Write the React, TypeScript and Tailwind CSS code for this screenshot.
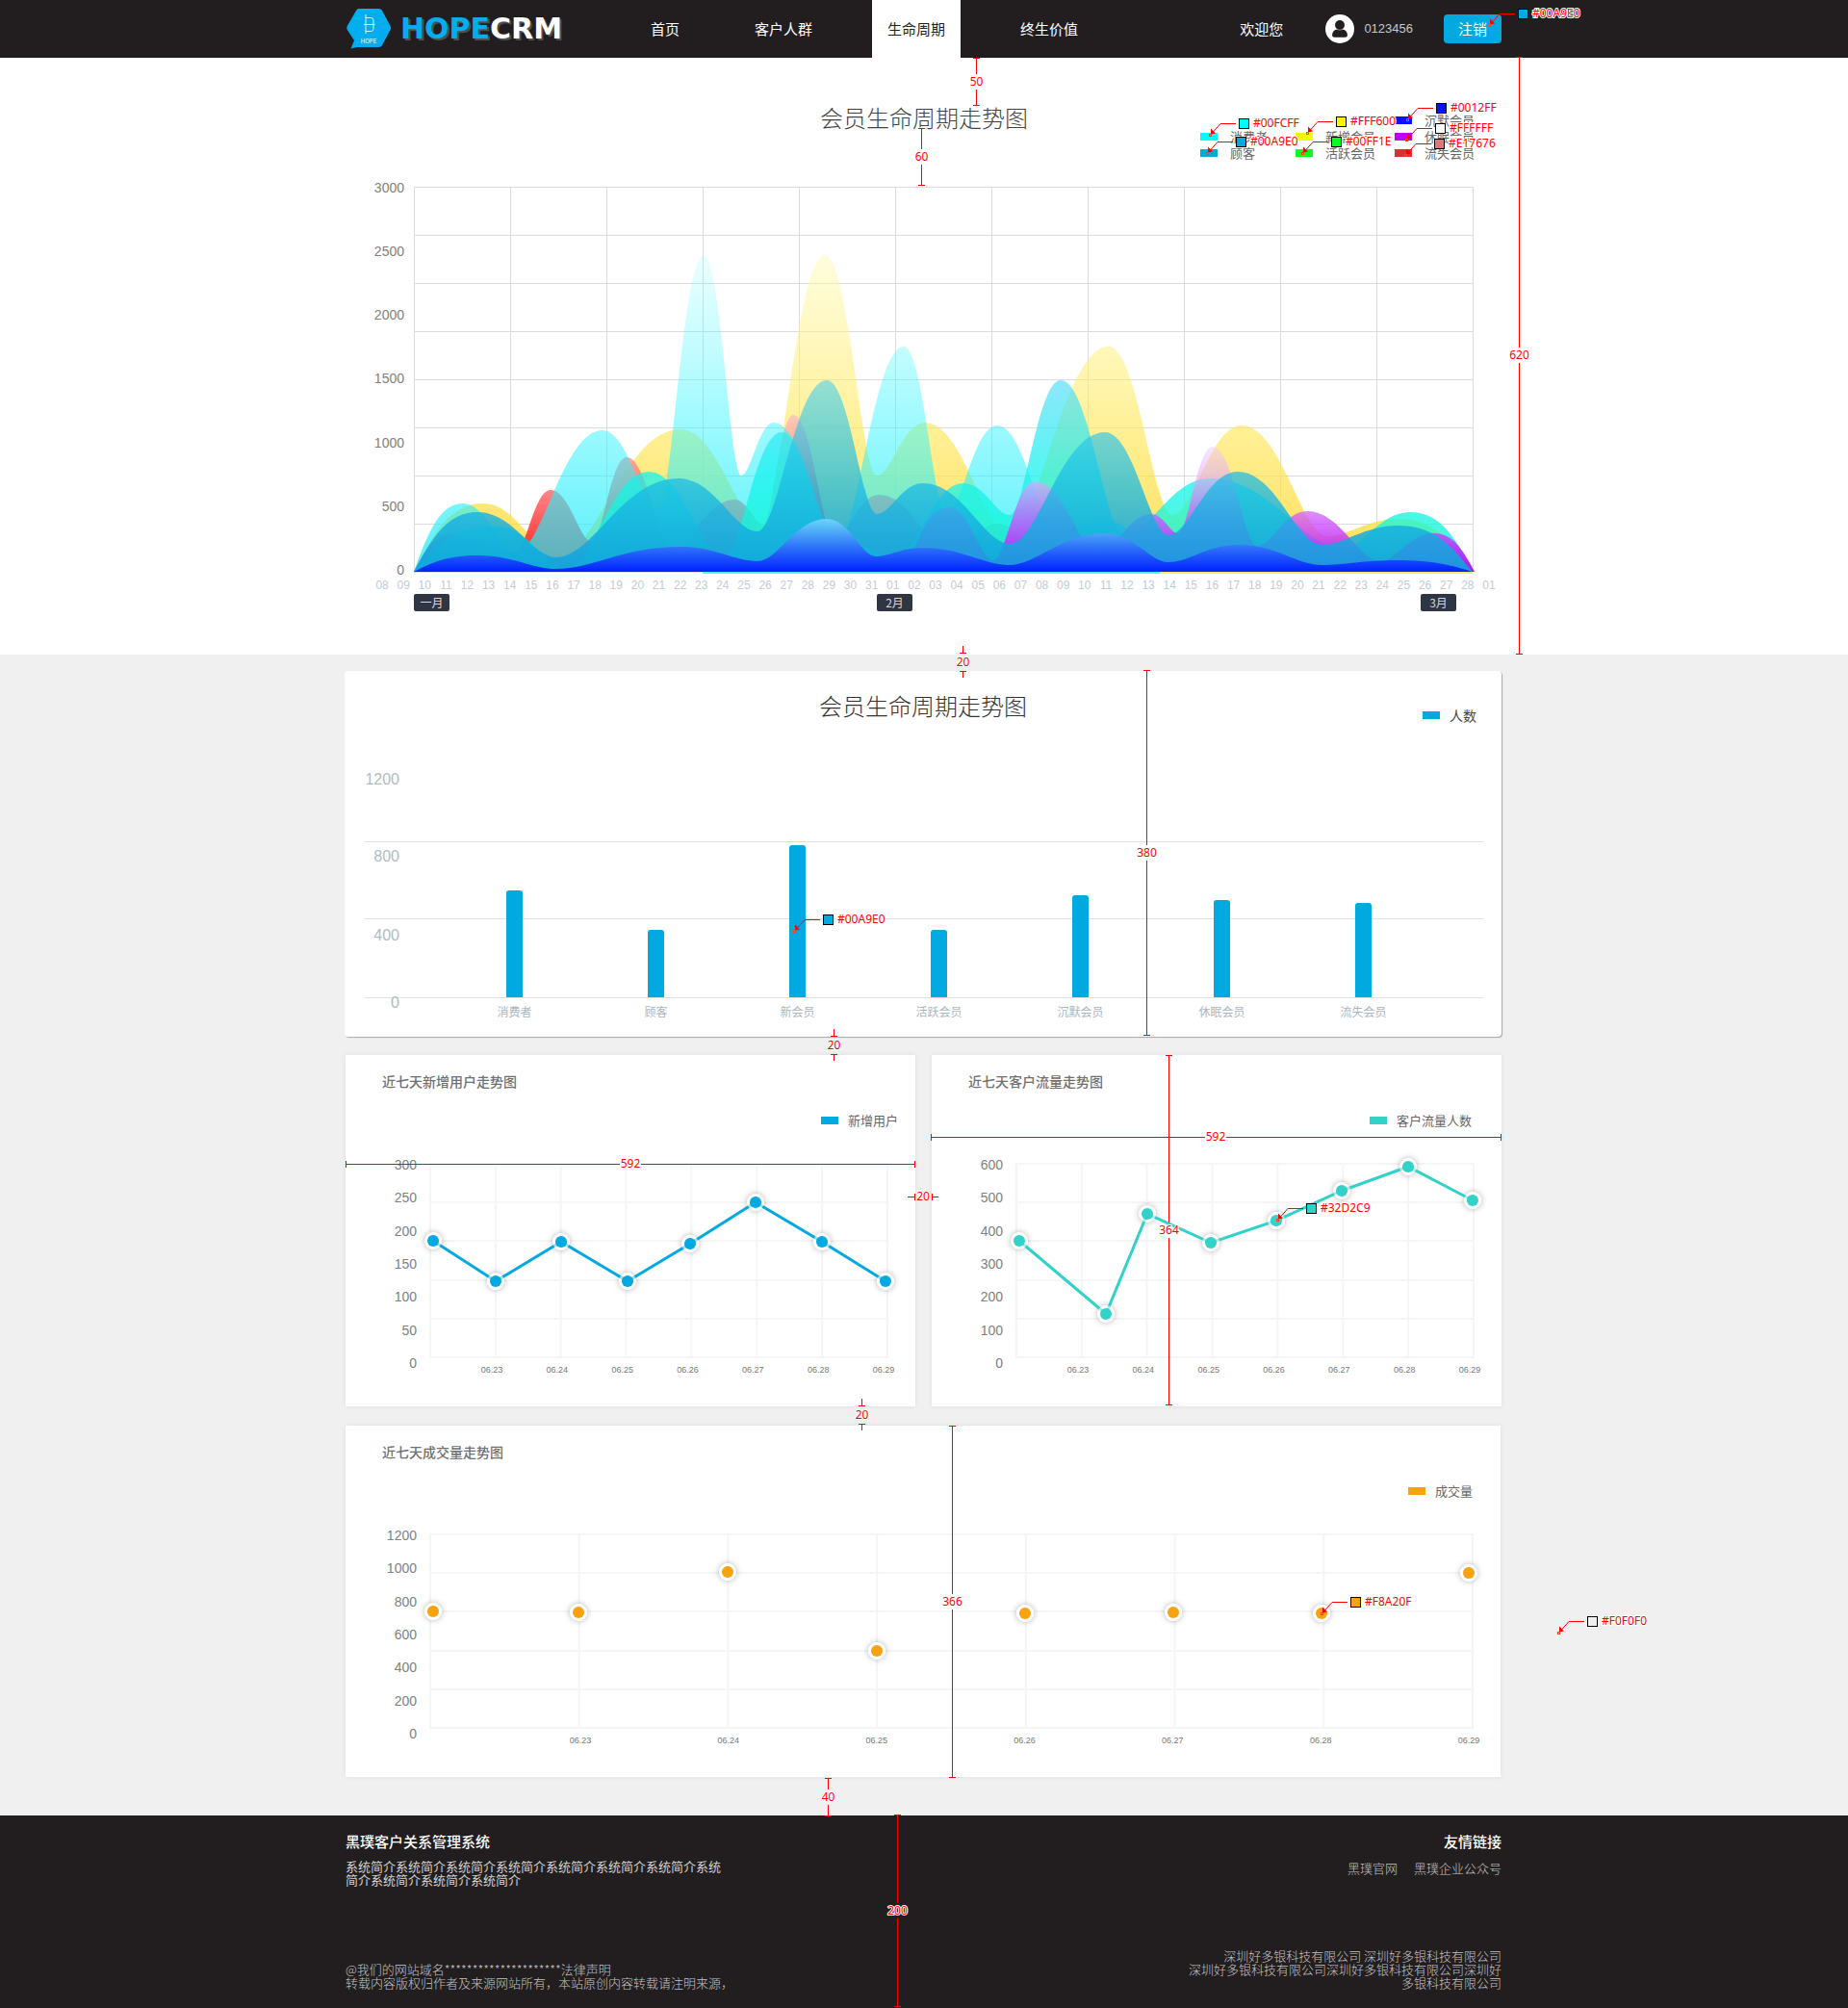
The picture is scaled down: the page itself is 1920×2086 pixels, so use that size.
import React from "react";

type Point = [number, number];

const MENU = ["首页", "客户人群", "生命周期", "终生价值"];

/* ---------- shared pieces ---------- */

function Swatch({ className }: { className: string }) {
  return <span className={`h-2 w-[18px] shrink-0 ${className}`} />;
}

/* ---------- header ---------- */

function LogoMark() {
  return (
    <svg width="47" height="42" viewBox="0 0 47 42" aria-hidden="true">
      <path
        d="M12.5 0H33.5Q36 0 37 2L45.5 18Q46.5 20 45.5 22L37 38Q36 40 33.5 40H10.5L4.500 41.500L8 33L.8 22Q-.2 20 .8 18L10 2Q11 0 12.500 0Z"
        fill="#00aeef"
      />
      <path
        d="M20 6V26M20 9.500H25.500Q28 9.500 28 12V21Q28 23.500 25.500 23.500H20M18 16.500H29.500"
        fill="none"
        stroke="#fff"
        strokeWidth="0.9"
      />
      <text x="23" y="35.500" textAnchor="middle" fontSize="6" fontFamily="Inter, sans-serif" fill="#fff">
        HOPE
      </text>
    </svg>
  );
}

function Avatar() {
  return (
    <svg className="ml-[44px]" width="30" height="30" viewBox="0 0 30 30" aria-hidden="true">
      <circle cx="15" cy="15" r="15" fill="#fff" />
      <circle cx="15" cy="11" r="5" fill="#221e1f" />
      <path d="M7 21.500Q7.500 16 12.500 15.500Q15 17.200 17.500 15.500Q22.500 16 23 21.500Q23 23.800 20.500 23.800H9.500Q7 23.800 7 21.500Z" fill="#221e1f" />
    </svg>
  );
}

function Header() {
  return (
    <header className="bg-[#221e1f] text-white">
      <div className="mx-auto flex h-[60px] max-w-[1200px] items-center">
        <a href="#" className="flex w-[300px] shrink-0 items-center gap-[9px]">
          <LogoMark />
          <span className="font-['DejaVu_Sans',sans-serif] text-[30px] leading-8 font-bold [text-shadow:2px_2px_0_#4d4f52]">
            <span className="text-[#00aeef]">HOPE</span>CRM
          </span>
        </a>
        <nav className="flex gap-[46px]">
          {MENU.map((item) => (
            <a
              key={item}
              href="#"
              className={
                item === "生命周期"
                  ? "bg-white px-4 text-[15px] leading-[60px] text-[#222]"
                  : "px-4 text-[15px] leading-[60px]"
              }
            >
              {item}
            </a>
          ))}
        </nav>
        <div className="ml-auto flex items-center">
          <span className="text-[15px]">欢迎您</span>
          <Avatar />
          <span className="ml-[10px] font-['Liberation_Sans',sans-serif] text-[13px] text-[#c9c9c9]">0123456</span>
          <button type="button" className="ml-[32px] h-[30px] w-[60px] rounded bg-[#00a9e0] text-[15px]">
            注销
          </button>
        </div>
      </div>
    </header>
  );
}

/* ---------- life-cycle trend ---------- */

/* Smooth closed area whose listed points are its peaks and troughs. Peaks are broad, troughs narrow. */
function areaPath(points: Point[]) {
  let d = `M${points[0][0]} 400`;
  for (let i = 1; i < points.length; i++) {
    const [x0, y0] = points[i - 1];
    const [x1, y1] = points[i];
    const dx = x1 - x0;
    const first = i === 1;
    const last = i === points.length - 1;
    const c0x = x0 + dx * (y0 < y1 ? 0.46 : 0.3);
    const c1x = x1 - dx * (y1 < y0 ? 0.46 : 0.3);
    const c0y = first ? y0 + (y1 - y0) * 0.6 : y0;
    const c1y = last ? y1 + (y0 - y1) * 0.6 : y1;
    d += `C${c0x} ${c0y} ${c1x} ${c1y} ${x1} ${y1}`;
  }
  return d + "V400Z";
}

const SERIES: { id: string; top: number; stops: [number, string, number][]; points: Point[] }[] = [
  {
    id: "fresh",
    top: 70,
    stops: [[0, "#fff9a8", 0.4], [0.5, "#ffe95c", 0.6], [1, "#ffd834", 0.85]],
    points: [[0, 400], [72, 329], [150, 385], [277, 252], [361, 350], [427, 71], [481, 300], [531, 245], [618, 360], [722, 166], [788, 341], [860, 248], [949, 363], [1024, 345], [1100, 400]],
  },
  {
    id: "lost",
    top: 230,
    stops: [[0, "#ffc4c8", 0.75], [0.5, "#ff7070", 0.85], [1, "#ff1010", 1]],
    points: [[0, 400], [40, 361], [105, 381], [142, 315], [185, 369], [221, 281], [268, 376], [333, 325], [363, 351], [394, 237], [437, 366], [483, 320], [560, 385], [606, 350], [646, 400]],
  },
  {
    id: "consumer",
    top: 70,
    stops: [[0, "#5cf8ff", 0.12], [0.5, "#30f5ff", 0.45], [1, "#20e8f8", 0.75]],
    points: [[0, 400], [51, 329], [106, 380], [196, 253], [254, 335], [301, 71], [340, 300], [374, 245], [441, 365], [509, 166], [553, 339], [606, 248], [670, 363], [714, 346], [775, 400]],
  },
  {
    id: "active",
    top: 200,
    stops: [[0, "#50dcfa", 0.65], [0.5, "#18f2ee", 0.75], [1, "#10fac8", 0.8]],
    points: [[0, 400], [83, 352], [160, 396], [244, 296], [322, 385], [382, 255], [438, 366], [500, 385], [571, 308], [619, 341], [672, 201], [738, 362], [827, 303], [965, 376], [1035, 338], [1101, 400]],
  },
  {
    id: "dormant",
    top: 265,
    stops: [[0, "#f3c8ff", 0.4], [0.3, "#dca8ff", 0.65], [0.6, "#cc50ff", 0.75], [1, "#b800ff", 0.95]],
    points: [[512, 400], [556, 333], [602, 388], [645, 306], [712, 382], [766, 340], [794, 360], [830, 270], [876, 373], [928, 337], [1004, 389], [1060, 360], [1102, 400]],
  },
  {
    id: "customer",
    top: 200,
    stops: [[0, "#40d0f0", 0.55], [0.5, "#1cbce4", 0.72], [1, "#10a0dc", 0.92]],
    points: [[0, 400], [66, 338], [148, 385], [275, 303], [357, 358], [429, 201], [481, 340], [529, 308], [619, 371], [718, 255], [784, 362], [856, 296], [943, 372], [1023, 352], [1100, 400]],
  },
  {
    id: "silent",
    top: 344,
    stops: [[0, "#72dcfc", 0.9], [0.5, "#3478fa", 0.95], [1, "#0020ff", 1]],
    points: [[0, 400], [66, 383], [147, 397], [277, 374], [357, 389], [429, 345], [480, 384], [529, 375], [618, 393], [718, 360], [784, 390], [857, 372], [943, 393], [1022, 388], [1100, 400]],
  },
];

function range(n: number) {
  return Array.from({ length: n }, (_, i) => i);
}

const DAYS = [...range(24).map((i) => i + 8), ...range(28).map((i) => i + 1), 1].map((n) => String(n).padStart(2, "0"));

const TREND_LEGEND = [
  { label: "消费者", swatch: "bg-[#00fcff]", cell: "col-start-1 row-start-2" },
  { label: "顾客", swatch: "bg-[#00a9e0]", cell: "col-start-1 row-start-3" },
  { label: "新增会员", swatch: "bg-[#fff600]", cell: "col-start-2 row-start-2" },
  { label: "活跃会员", swatch: "bg-[#00ff1e]", cell: "col-start-2 row-start-3" },
  { label: "沉默会员", swatch: "bg-[#0012ff]", cell: "col-start-3 row-start-1" },
  { label: "休眠会员", swatch: "bg-[#c000ff]", cell: "col-start-3 row-start-2" },
  { label: "流失会员", swatch: "bg-[#d83232]", cell: "col-start-3 row-start-3" },
];

function TrendPlot() {
  return (
    <svg className="block h-auto w-full overflow-visible" viewBox="0 0 1100 401" role="img" aria-label="会员生命周期走势图">
      <defs>
        {SERIES.map((s) => (
          <linearGradient key={s.id} id={s.id} gradientUnits="userSpaceOnUse" x1="0" y1={s.top} x2="0" y2="400">
            {s.stops.map(([offset, color, opacity]) => (
              <stop key={offset} offset={offset} stopColor={color} stopOpacity={opacity} />
            ))}
          </linearGradient>
        ))}
      </defs>
      <g stroke="#dcdcdc">
        {range(9).map((i) => (
          <line key={i} x1="0" x2="1100" y1={i * 50 + 0.5} y2={i * 50 + 0.5} />
        ))}
        {range(12).map((i) => (
          <line key={i} x1={i * 100 + 0.5} x2={i * 100 + 0.5} y1="0" y2="400" />
        ))}
      </g>
      <rect x="300" y="400" width="475" height="2" fill="#50eef8" />
      <rect x="775" y="400" width="325" height="2" fill="#ffe66a" />
      {SERIES.map((s) => (
        <path key={s.id} d={areaPath(s.points)} fill={`url(#${s.id})`} />
      ))}
    </svg>
  );
}

function TrendSection() {
  const month = "w-[37px] rounded-xs bg-[#2f3543] text-center text-[12px] leading-[18px] text-[#d5d7dc]";
  return (
    <section className="bg-white pt-[46px] pb-[45px]">
      <div className="mx-auto max-w-[1200px]">
        <div className="grid grid-cols-[1fr_auto_1fr] items-start">
          <h1 className="col-start-2 text-2xl leading-8 font-light text-[#444]">会员生命周期走势图</h1>
          <ul className="mt-[10px] mr-[28px] grid grid-cols-[99px_103px_auto] justify-end text-[13px] leading-[17px] text-[#666]">
            {TREND_LEGEND.map((l) => (
              <li key={l.label} className={`flex items-center gap-[13px] ${l.cell}`}>
                <Swatch className={l.swatch} />
                {l.label}
              </li>
            ))}
          </ul>
        </div>
        <div className="mt-5 flex">
          <div className="flex w-[60px] flex-col justify-between text-right font-['Liberation_Sans',sans-serif] text-[14px] leading-4 text-[#808080]">
            {[3000, 2500, 2000, 1500, 1000, 500, 0].map((v) => (
              <span key={v}>{v}</span>
            ))}
          </div>
          <div className="mt-[7px] mr-[30px] mb-[5px] ml-[10px] flex-1">
            <TrendPlot />
          </div>
        </div>
        <div className="mr-[2px] ml-[26px] grid grid-cols-[repeat(53,minmax(0,1fr))] text-center font-['Liberation_Sans',sans-serif] text-[12px] leading-4 text-[#c6cad4]">
          {DAYS.map((d, i) => (
            <span key={i}>{d}</span>
          ))}
        </div>
        <div className="mt-px mr-[47px] ml-[70px] flex">
          <span className={month}>一月</span>
          <span className="grow-[444]" />
          <span className={month}>2月</span>
          <span className="grow-[528]" />
          <span className={month}>3月</span>
        </div>
      </div>
    </section>
  );
}

/* ---------- member counts ---------- */

const BARS = [
  { label: "消费者", height: 111 },
  { label: "顾客", height: 70 },
  { label: "新会员", height: 158 },
  { label: "活跃会员", height: 70 },
  { label: "沉默会员", height: 106 },
  { label: "休眠会员", height: 101 },
  { label: "流失会员", height: 98 },
];

function MembersCard() {
  return (
    <section className="-ml-[2px] rounded bg-white pt-5 pb-[18px] shadow-[1px_1px_1px_#a8a8a8]">
      <div className="grid grid-cols-[1fr_auto_1fr] items-start">
        <h2 className="col-start-2 text-2xl leading-8 font-light text-[#333]">会员生命周期走势图</h2>
        <div className="mt-[18px] mr-[26px] flex items-center gap-[10px] justify-self-end text-[14px] leading-4 text-[#444]">
          <Swatch className="bg-[#00a9e0]" />
          人数
        </div>
      </div>
      <div className="mt-[49px] grid">
        <div className="col-start-1 row-start-1 mr-[19px] ml-[21px] pt-[74px]">
          <div className="h-[80px] border-t border-[#e0e0e0]" />
          <div className="h-[82px] border-t border-[#e0e0e0]" />
          <div className="border-t border-[#e0e0e0]" />
        </div>
        <div className="col-start-1 row-start-1 flex w-[57px] flex-col text-right font-['Liberation_Sans',sans-serif] text-[16px] leading-5 text-[#b0bcc4]">
          <span>1200</span>
          <span className="mt-[60px]">800</span>
          <span className="mt-[62px]">400</span>
          <span className="mt-[50px]">0</span>
        </div>
        <div className="col-start-1 row-start-1 mr-[70px] ml-[103px] grid grid-cols-7">
          {BARS.map((b) => (
            <div key={b.label} className="flex flex-col items-center">
              <div className="flex h-[236px] items-end">
                <div className="w-[17px] rounded-t-[3px] bg-[#00a9e0]" style={{ height: b.height }} />
              </div>
              <span className="mt-[7px] text-[12px] leading-4 text-[#aab6bd]">{b.label}</span>
            </div>
          ))}
        </div>
      </div>
    </section>
  );
}

/* ---------- seven-day charts ---------- */

interface WeekProps {
  title: string;
  legend: string;
  swatch: string;
  color: string;
  legendInset: string;
  labelInset: string;
  ticks: number[];
  width: number;
  points: Point[];
  joined: boolean;
}

const DATES = ["06.23", "06.24", "06.25", "06.26", "06.27", "06.28", "06.29"];

function WeekCard(p: WeekProps) {
  const rows = [1, 41, 81, 122, 162, 202];
  return (
    <section className="bg-white pt-[17px] pb-[32px] shadow-[0_0_4px_#dcdcdc]">
      <h2 className="pl-[38px] text-[14px] leading-5 font-medium text-[#707070]">{p.title}</h2>
      <div className={`mt-[23px] flex items-center justify-end gap-[10px] text-[13px] leading-4 text-[#666] ${p.legendInset}`}>
        <Swatch className={p.swatch} />
        {p.legend}
      </div>
      <div className="mt-[30px] flex">
        <div className="flex h-[222px] w-[74px] flex-col justify-between text-right font-['Liberation_Sans',sans-serif] text-[14px] leading-4 text-[#808080]">
          {p.ticks.map((t) => (
            <span key={t}>{t}</span>
          ))}
        </div>
        <div className="mt-[6px] mr-[29px] ml-[14px] flex-1">
          <svg className="block h-auto w-full overflow-visible" viewBox={`0 0 ${p.width} 203`} role="img" aria-label={p.title}>
            <g stroke="#f5f5f5" strokeWidth="2">
              {rows.map((y) => (
                <line key={y} x1="0" x2={p.width} y1={y} y2={y} />
              ))}
              {range(8).map((i) => (
                <line key={i} x1={(i * p.width) / 7} x2={(i * p.width) / 7} y1="0" y2="203" />
              ))}
            </g>
            {p.points.map(([x, y]) => (
              <circle key={x} cx={x} cy={y} r="9" fill="#fff" className="drop-shadow-[0_0_3px_rgba(0,0,0,0.3)]" />
            ))}
            {p.joined && (
              <polyline points={p.points.map((pt) => pt.join(",")).join(" ")} fill="none" stroke={p.color} strokeWidth="3" />
            )}
            {p.points.map(([x, y]) => (
              <g key={x}>
                <circle cx={x} cy={y} r="7.500" fill="none" stroke="#fff" strokeWidth="3" opacity={p.joined ? 0.6 : 1} />
                <circle cx={x} cy={y} r="6" fill={p.color} />
              </g>
            ))}
          </svg>
          <div className={`-mr-4 mt-[6px] flex justify-between text-center font-['Liberation_Sans',sans-serif] text-[9px] leading-3 text-[#777] ${p.labelInset}`}>
            {DATES.map((d) => (
              <span key={d} className="w-10">
                {d}
              </span>
            ))}
          </div>
        </div>
      </div>
    </section>
  );
}

/* ---------- footer ---------- */

function Footer() {
  return (
    <footer className="bg-[#221e1f] text-white">
      <div className="mx-auto flex min-h-[200px] max-w-[1200px] justify-between pt-[17px] pb-[19px] text-[13px] leading-[14px] whitespace-nowrap">
        <div className="-ml-px flex flex-col justify-between">
          <div>
            <h2 className="text-[15px] leading-5 font-medium">黑璞客户关系管理系统</h2>
            <p className="mt-[9px] text-[#d4d4d4]">
              系统简介系统简介系统简介系统简介系统简介系统简介系统简介系统
              <br />
              简介系统简介系统简介系统简介
            </p>
          </div>
          <p className="font-light text-[#c4c4c4]">
            @我们的网站域名*********************法律声明
            <br />
            转载内容版权归作者及来源网站所有，本站原创内容转载请注明来源，
          </p>
        </div>
        <div className="flex flex-col justify-between text-right">
          <div>
            <h2 className="text-[15px] leading-5 font-medium">友情链接</h2>
            <div className="mt-[11px] flex justify-end gap-[17px] font-light text-[#c4c4c4]">
              <a href="#">黑璞官网</a>
              <a href="#">黑璞企业公众号</a>
            </div>
          </div>
          <p className="font-light text-[#c4c4c4]">
            深圳好多银科技有限公司 深圳好多银科技有限公司
            <br />
            深圳好多银科技有限公司深圳好多银科技有限公司深圳好
            <br />
            多银科技有限公司
          </p>
        </div>
      </div>
    </footer>
  );
}

/* ---------- design notes laid over the page ---------- */

function NoteText({ x, y, anchor, children }: { x: number; y: number; anchor: "start" | "middle"; children: React.ReactNode }) {
  return (
    <text x={x} y={y + 4} textAnchor={anchor} fill="#f00" stroke="#fff" strokeWidth="2" paintOrder="stroke" strokeLinejoin="round">
      {children}
    </text>
  );
}

/* A dimension line; when `outside` is set the strokes lie beyond the two ends. */
function Measure({ at, from, to, vertical, label, outside }: { at: number; from: number; to: number; vertical?: boolean; label: string; outside?: boolean }) {
  const mid = Math.round((from + to) / 2);
  const gap = vertical ? 8 : 11;
  const spans: Point[] = outside
    ? [[from - 7, from], [to, to + 7]]
    : [[from, mid - gap], [mid + gap, to]];
  const c = at + 0.5;
  const d = vertical
    ? `M${c} ${spans[0][0]}V${spans[0][1]}M${c} ${spans[1][0]}V${spans[1][1]}M${c - 3.5} ${from + 0.5}h7M${c - 3.5} ${to + 0.5}h7`
    : `M${spans[0][0]} ${c}H${spans[0][1]}M${spans[1][0]} ${c}H${spans[1][1]}M${from + 0.5} ${c - 3.5}v7M${to + 0.5} ${c - 3.5}v7`;
  return (
    <g>
      <path d={d} stroke="#f00" fill="none" />
      <NoteText x={vertical ? c : mid} y={vertical ? mid : at} anchor="middle">
        {label}
      </NoteText>
    </g>
  );
}

function ColorNote({ x, y, color }: { x: number; y: number; color: string }) {
  const c = y + 0.5;
  return (
    <g>
      <path d={`M${x - 3} ${c}H${x - 19}L${x - 27} ${c + 9}`} stroke="#f00" fill="none" />
      <path d={`M${x - 29} ${c + 11}v-6l5 5Z`} fill="#f00" />
      <rect x={x - 30.5} y={c + 11} width="2" height="2" fill="none" stroke="#f04a24" />
      <rect x={x + 0.5} y={c - 5} width="10" height="10" fill={color} stroke="#000" />
      <NoteText x={x + 15} y={y} anchor="start">
        {color}
      </NoteText>
    </g>
  );
}

function DesignNotes() {
  return (
    <svg
      className="pointer-events-none absolute top-0 left-1/2 h-px w-[1200px] -translate-x-1/2 overflow-visible font-['Noto_Sans',sans-serif] text-[12px]"
      aria-hidden="true"
    >
      <g transform="translate(-360 0)">
        <Measure vertical at={1014} from={60} to={109} label="50" />
        <Measure vertical at={957} from={133} to={192} label="60" />
        <Measure vertical at={1578} from={59} to={679} label="620" />
        <Measure vertical outside at={1000} from={678} to={697} label="20" />
        <Measure vertical at={1191} from={696} to={1075} label="380" />
        <Measure vertical outside at={866} from={1076} to={1095} label="20" />
        <Measure at={1209} from={359} to={950} label="592" />
        <Measure at={1181} from={967} to={1559} label="592" />
        <Measure outside at={1243} from={950} to={968} label="20" />
        <Measure vertical at={1214} from={1096} to={1459} label="364" />
        <Measure vertical outside at={895} from={1460} to={1479} label="20" />
        <Measure vertical at={989} from={1481} to={1846} label="366" />
        <Measure vertical at={860} from={1847} to={1886} label="40" />
        <Measure vertical at={932} from={1885} to={2084} label="200" />
        <ColorNote x={1577} y={14} color="#00A9E0" />
        <ColorNote x={1287} y={128} color="#00FCFF" />
        <ColorNote x={1388} y={126} color="#FFF600" />
        <ColorNote x={1492} y={112} color="#0012FF" />
        <ColorNote x={1491} y={133} color="#FFFFFF" />
        <ColorNote x={1490} y={149} color="#E17676" />
        <ColorNote x={1284} y={147} color="#00A9E0" />
        <ColorNote x={1383} y={147} color="#00FF1E" />
        <ColorNote x={855} y={955} color="#00A9E0" />
        <ColorNote x={1357} y={1255} color="#32D2C9" />
        <ColorNote x={1403} y={1664} color="#F8A20F" />
        <ColorNote x={1649} y={1684} color="#F0F0F0" />
      </g>
    </svg>
  );
}

/* ---------- page ---------- */

export default function App() {
  return (
    <div className="relative overflow-x-hidden bg-[#f0f0f0] font-['Noto_Sans_CJK_SC',sans-serif]">
      <Header />
      <main>
        <TrendSection />
        <div className="mx-auto max-w-[1200px] pt-[17px] pb-10">
          <MembersCard />
          <div className="mt-[19px] -ml-px grid grid-cols-2 gap-x-[17px] gap-y-5">
            <WeekCard
              title="近七天新增用户走势图"
              legend="新增用户"
              swatch="bg-[#00a9e0]"
              color="#00a9e0"
              legendInset="pr-[18px]"
              labelInset="pl-[44px]"
              ticks={[300, 250, 200, 150, 100, 50, 0]}
              width={475}
              joined
              points={[[3, 81], [68, 123], [136, 82], [205, 123], [270, 84], [338, 41], [407, 82], [473, 123]]}
            />
            <WeekCard
              title="近七天客户流量走势图"
              legend="客户流量人数"
              swatch="bg-[#32d2c9]"
              color="#32d2c9"
              legendInset="pr-[31px]"
              labelInset="pl-[44px]"
              ticks={[600, 500, 400, 300, 200, 100, 0]}
              width={475}
              joined
              points={[[3, 81], [93, 157], [136, 53], [202, 83], [270, 60], [338, 29], [407, 4], [474, 39]]}
            />
            <div className="col-span-2 mr-px">
              <WeekCard
                title="近七天成交量走势图"
                legend="成交量"
                swatch="bg-[#f8a20f]"
                color="#f8a20f"
                legendInset="pr-[29px]"
                labelInset="pl-[136px]"
                ticks={[1200, 1000, 800, 600, 400, 200, 0]}
                width={1083}
                joined={false}
                points={[[3, 81], [154, 82], [309, 40], [464, 122], [618, 83], [772, 82], [926, 83], [1079, 41]]}
              />
            </div>
          </div>
        </div>
      </main>
      <Footer />
      <DesignNotes />
    </div>
  );
}
